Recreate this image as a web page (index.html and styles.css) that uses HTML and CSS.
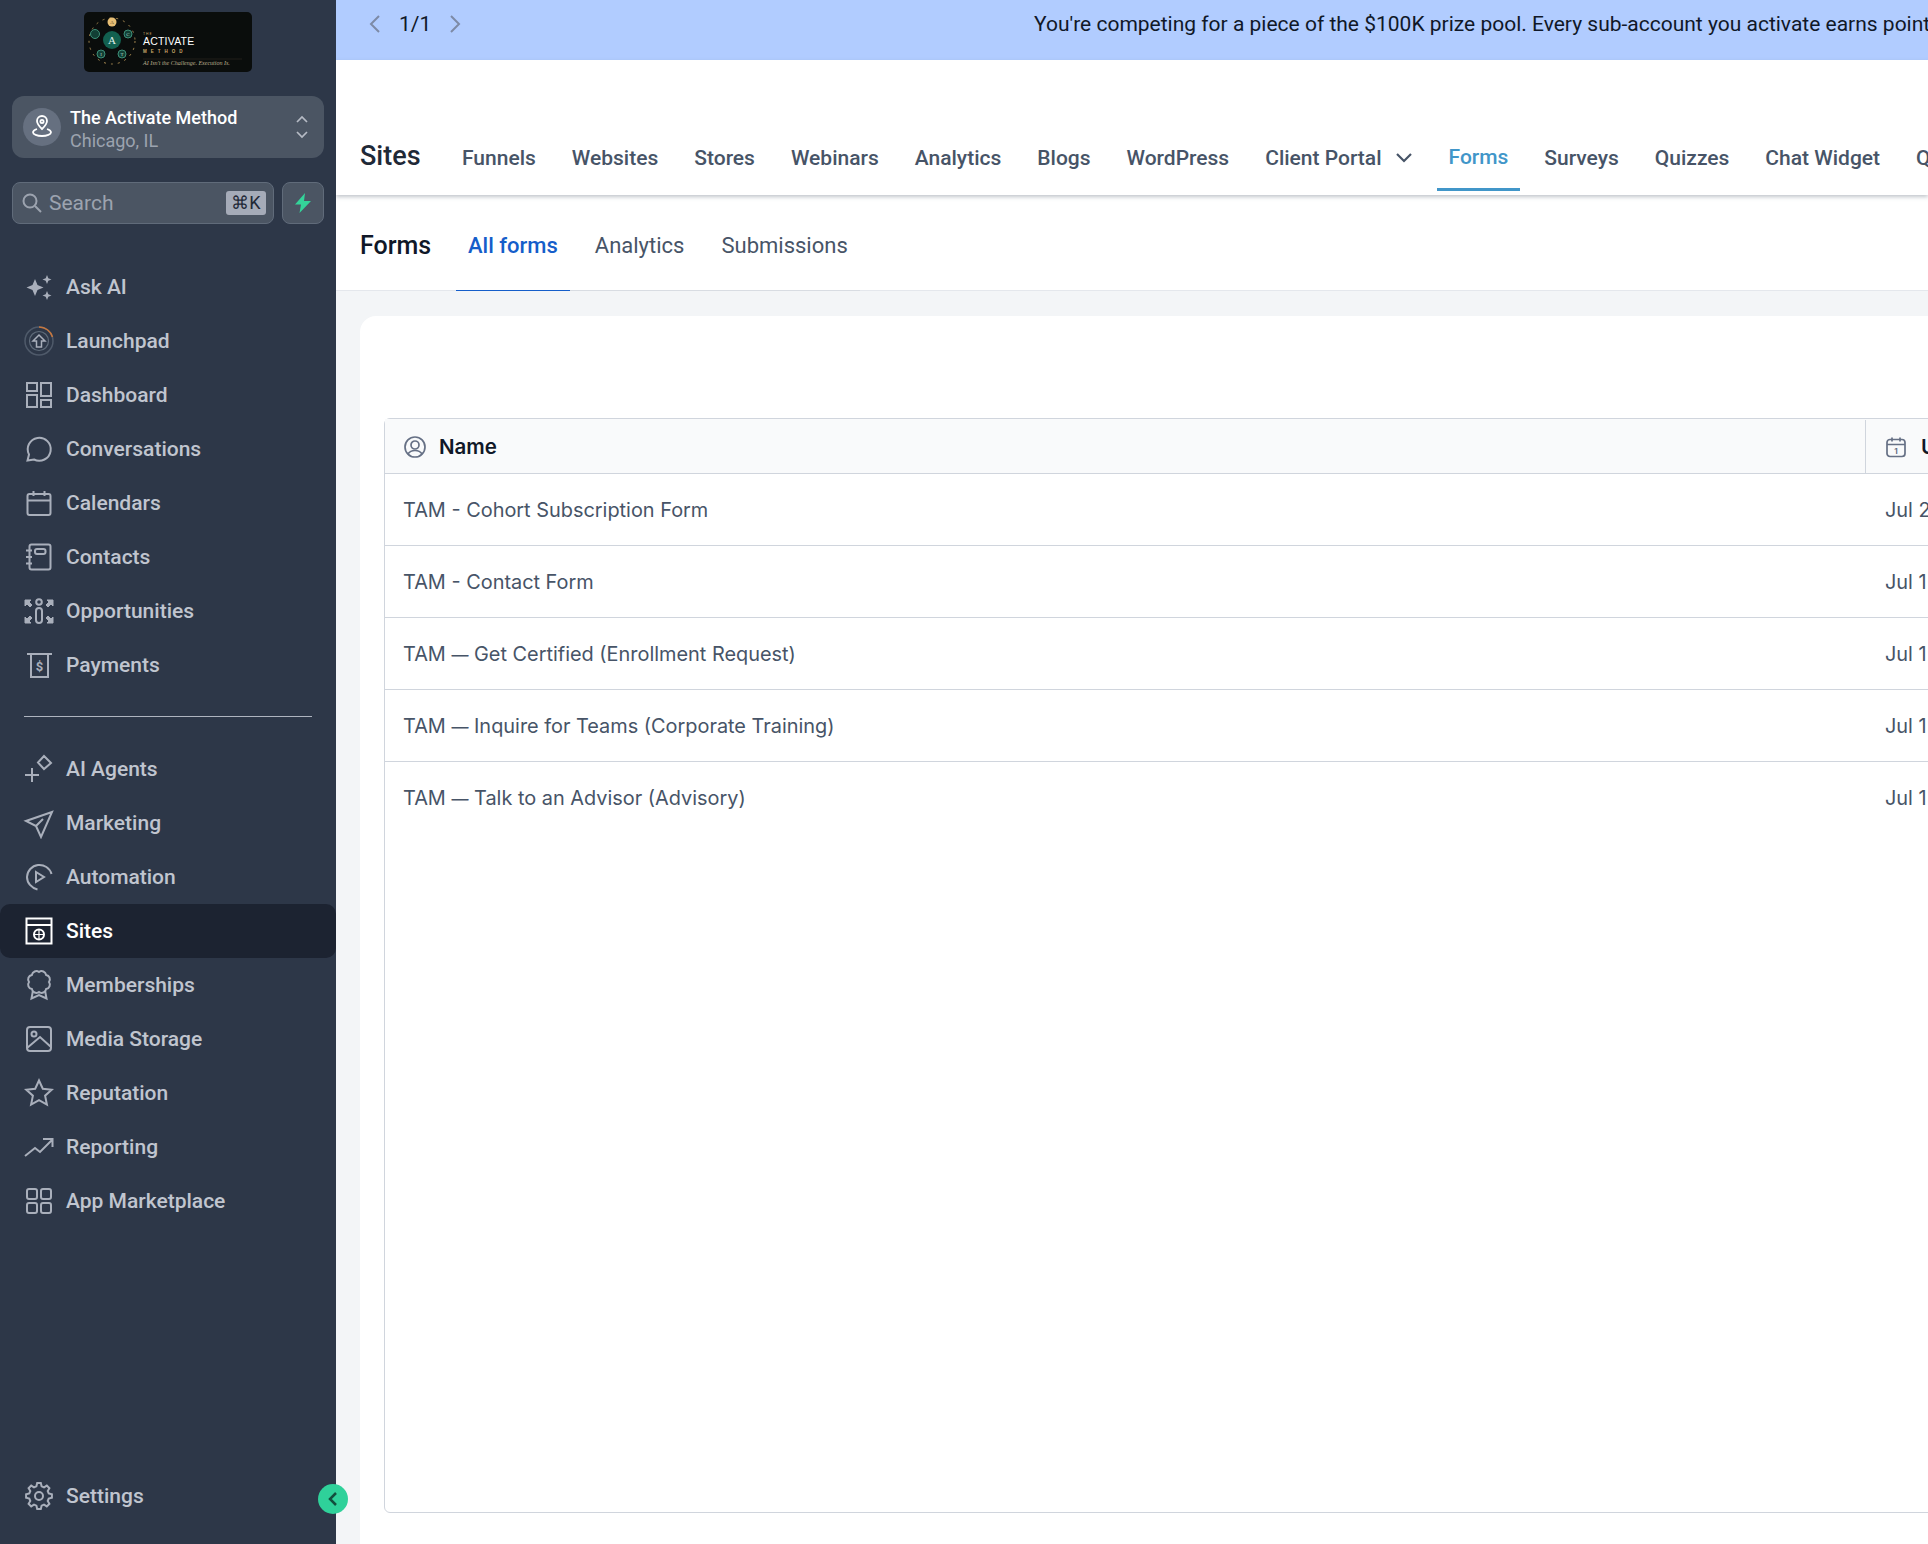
FILE: index.html
```html
<!DOCTYPE html>
<html>

<head>
    <meta charset="UTF-8">
    <title>Forms</title>
    <link rel="stylesheet" href="styles.css">
</head>

<body>
    <div class="app">
        <!-- sidebar -->
        <aside class="sidebar">
            <div class="logoWrap">
                <svg class="logo" width="168" height="60" viewBox="0 0 168 60">
                    <rect width="168" height="60" rx="5" fill="#0a0d0c"/>
                    <circle cx="28" cy="29" r="23" fill="none" stroke="#a98b52" stroke-width="1" stroke-dasharray="2 5"/>
                    <circle cx="28" cy="28" r="9" fill="#12604f"/>
                    <text x="28" y="32" class="logoA">A</text>
                    <circle cx="28" cy="10" r="4.5" fill="#e6bd74"/>
                    <circle cx="11" cy="22" r="4.5" fill="#123f35" stroke="#3d8f78"/>
                    <circle cx="44" cy="22" r="4" fill="#123f35" stroke="#3d8f78"/>
                    <circle cx="17" cy="42" r="4" fill="#123f35" stroke="#3d8f78"/>
                    <circle cx="38" cy="42" r="4" fill="#123f35" stroke="#3d8f78"/>
                    <text x="28" y="12" class="logoDot dark">A</text>
                    <text x="44" y="24" class="logoDot">C</text>
                    <text x="17" y="44" class="logoDot">I</text>
                    <text x="38" y="44" class="logoDot">T</text>
                    <text x="59" y="23" class="logoThe">THE</text>
                    <text x="59" y="33" class="logoMain">ACTIVATE</text>
                    <text x="59" y="41" class="logoSub">METHOD</text>
                    <line x1="59" y1="47" x2="158" y2="47" stroke="#3a3324" stroke-width="0.5"/>
                    <text x="59" y="53" class="logoTag">AI Isn't the Challenge. Execution Is.</text>
                </svg>
            </div>

            <div class="account">
                <span class="accountIcon">
                    <svg width="26" height="26" viewBox="0 0 26 26" fill="none" stroke="#fff" stroke-width="1.8"><path d="M13 15c-3-3-5-5-5-8a5 5 0 0 1 10 0c0 3-2 5-5 8z"/><circle cx="13" cy="7.5" r="1.6"/><path d="M8 15c-2.500.8-4 2-4 3.300 0 2 4 3.700 9 3.700s9-1.700 9-3.700c0-1.300-1.500-2.500-4-3.300"/></svg>
                </span>
                <div class="accountText">
                    <div class="accountName">The Activate Method</div>
                    <div class="accountCity">Chicago, IL</div>
                </div>
                <svg class="accountArrows" width="14" height="28" viewBox="0 0 14 28" fill="none" stroke="#b6bbc5" stroke-width="1.700"><path d="M2 9l5-5 5 5M2 19l5 5 5-5"/></svg>
            </div>

            <div class="searchRow">
                <div class="search">
                    <svg width="22" height="22" viewBox="0 0 22 22" fill="none" stroke="#9ca3af" stroke-width="2"><circle cx="9" cy="9" r="6.500"/><path d="M14 14l6 6"/></svg>
                    <span class="searchText">Search</span>
                    <span class="kbd">⌘K</span>
                </div>
                <div class="boltBtn">
                    <svg width="18" height="22" viewBox="0 0 18 22" fill="#34d399"><path d="M11 1L1 12.500h6L5.500 21 17 9h-7z"/></svg>
                </div>
            </div>

            <nav class="menu">
                <a class="item">
                    <svg class="ic" viewBox="0 0 32 32"><path class="icFill" d="M12 8l2.500 6 6 2.500-6 2.500L12 25l-2.500-6-6-2.500 6-2.500zM24 4l1.300 3.200L28.500 8.500l-3.200 1.300L24 13l-1.300-3.200L19.500 8.500l3.200-1.300zM24 20l1.300 3.200 3.200 1.300-3.200 1.300L24 29l-1.300-3.200-3.200-1.300 3.200-1.300z"/></svg>
                    Ask AI
                </a>
                <a class="item">
                    <svg class="ic" viewBox="0 0 32 32" fill="none"><circle cx="16" cy="16" r="14" stroke="#4f5a6a" stroke-width="1.500"/><path d="M16 2a14 14 0 0 1 13.500 10" stroke="#c7773e" stroke-width="1.500"/><circle cx="16" cy="16" r="9.500" stroke="#5f6b7a" stroke-width="1.200"/><path d="M16 10l-6 6h3.500v6h5v-6H22z" stroke="#a9afbb" stroke-width="1.500"/></svg>
                    Launchpad
                </a>
                <a class="item">
                    <svg class="ic" viewBox="0 0 32 32"><rect x="4" y="4" width="10" height="8"/><rect x="18" y="4" width="10" height="13"/><rect x="4" y="16" width="10" height="12"/><rect x="18" y="21" width="10" height="7"/></svg>
                    Dashboard
                </a>
                <a class="item">
                    <svg class="ic" viewBox="0 0 32 32"><path d="M4.500 27.500l1.500-6a11.500 11.500 0 1 1 5 5z"/></svg>
                    Conversations
                </a>
                <a class="item">
                    <svg class="ic" viewBox="0 0 32 32"><rect x="4.500" y="7" width="23" height="21" rx="2"/><path d="M4.500 13.500h23M10.500 4v5M21.500 4v5"/></svg>
                    Calendars
                </a>
                <a class="item">
                    <svg class="ic" viewBox="0 0 32 32"><rect x="6.500" y="3.500" width="21" height="25" rx="2"/><rect x="12" y="8" width="10.500" height="5" rx="2"/><path d="M3 9.500h6M3 16h6M3 22.500h6"/></svg>
                    Contacts
                </a>
                <a class="item">
                    <svg class="ic" viewBox="0 0 32 32"><circle cx="16" cy="7" r="2.800"/><rect x="13" y="13" width="6" height="15" rx="3"/><path class="icBold" d="M2 5h6l-2 2 3 3-2 2-3-3-2 2zM30 5h-6l2 2-3 3 2 2 3-3 2 2zM2 28h6l-2-2 3-3-2-2-3 3-2-2zM30 28h-6l2-2-3-3 2-2 3 3 2-2z"/></svg>
                    Opportunities
                </a>
                <a class="item">
                    <svg class="ic" viewBox="0 0 32 32"><path d="M4 5h25M8 5v23h17V5"/><text x="16.500" y="22" class="dollar">$</text></svg>
                    Payments
                </a>

                <div class="menuLine"></div>

                <a class="item">
                    <svg class="ic" viewBox="0 0 32 32"><path d="M21 3l7 7-7 6-6-6.500zM9 15v14M2 22h14"/></svg>
                    AI Agents
                </a>
                <a class="item">
                    <svg class="ic" viewBox="0 0 32 32"><path d="M29 5L3 14l10 5 5 11zM13 19l7-7"/></svg>
                    Marketing
                </a>
                <a class="item">
                    <svg class="ic" viewBox="0 0 32 32"><path d="M28.500 13A12.500 12.500 0 0 0 4 16c0 6 4.500 11 10.500 12.500"/><path d="M13 11l8 5-8 5z"/></svg>
                    Automation
                </a>
                <a class="item on">
                    <svg class="ic" viewBox="0 0 32 32"><rect x="3.500" y="3.500" width="25" height="25"/><path d="M3.500 10h25"/><circle cx="16" cy="19.500" r="5"/><path d="M11 19.500h10M16 14.500v10" stroke-width="1.200"/></svg>
                    Sites
                </a>
                <a class="item">
                    <svg class="ic" viewBox="0 0 32 32"><path d="M16 3A4.500 4.500 0 0 1 23.100 5.900 4.500 4.500 0 0 1 26 13 4.500 4.500 0 0 1 23.100 20.100 4.500 4.500 0 0 1 16 23 4.500 4.500 0 0 1 8.900 20.100 4.500 4.500 0 0 1 6 13 4.500 4.500 0 0 1 8.900 5.900 4.500 4.500 0 0 1 16 3z"/><path d="M10 21.500l-1.500 8 7.500-3.500 7.500 3.500-1.500-8"/></svg>
                    Memberships
                </a>
                <a class="item">
                    <svg class="ic" viewBox="0 0 32 32"><rect x="4" y="4" width="24" height="24" rx="3"/><circle cx="11" cy="11" r="2.500"/><path d="M4 25l13-11 11 10"/></svg>
                    Media Storage
                </a>
                <a class="item">
                    <svg class="ic" viewBox="0 0 32 32"><path d="M16 3.500l3.800 8.200 8.900 1-6.600 6 1.800 8.800-7.900-4.400-7.900 4.400 1.800-8.800-6.600-6 8.900-1z"/></svg>
                    Reputation
                </a>
                <a class="item">
                    <svg class="ic" viewBox="0 0 32 32"><path d="M2 25l10-8 5 4 12-12M20 8h9.500v8"/></svg>
                    Reporting
                </a>
                <a class="item">
                    <svg class="ic" viewBox="0 0 32 32"><rect x="4" y="4" width="10" height="10" rx="2"/><rect x="18" y="4" width="10" height="10" rx="2"/><rect x="4" y="18" width="10" height="10" rx="2"/><rect x="18" y="18" width="10" height="10" rx="2"/></svg>
                    App Marketplace
                </a>
            </nav>

            <a class="item settings">
                <svg class="ic" viewBox="0 0 32 32"><polygon points="13.400,6.300 14.200,3.100 17.800,3.100 18.600,6.300 21,7.300 23.800,5.600 26.400,8.200 24.700,11 25.700,13.400 28.900,14.200 28.900,17.800 25.700,18.600 24.700,21 26.400,23.800 23.800,26.400 21,24.700 18.600,25.700 17.800,28.900 14.200,28.900 13.400,25.700 11,24.700 8.200,26.400 5.600,23.800 7.300,21 6.300,18.600 3.100,17.800 3.100,14.200 6.300,13.400 7.300,11 5.600,8.200 8.200,5.600 11,7.300"/><circle cx="16" cy="16" r="4"/></svg>
                Settings
            </a>
            <span class="collapse">
                <svg width="14" height="16" viewBox="0 0 14 16" fill="none" stroke="#134e3d" stroke-width="2.500"><path d="M10 2L4 8l6 6"/></svg>
            </span>
        </aside>

        <main class="main">
            <!-- banner -->
            <div class="banner">
                <div class="pager">
                    <svg width="14" height="20" viewBox="0 0 14 20" fill="none" stroke="#7d8aa6" stroke-width="2"><path d="M11 2L3 10l8 8"/></svg>
                    <span>1/1</span>
                    <svg width="14" height="20" viewBox="0 0 14 20" fill="none" stroke="#7d8aa6" stroke-width="2"><path d="M3 2l8 8-8 8"/></svg>
                </div>
                <div class="bannerText">You're competing for a piece of the $100K prize pool. Every sub-account you activate earns point</div>
            </div>

            <!-- top tabs -->
            <header class="topbar">
                <div class="topTitle">Sites</div>
                <div class="topTabs">
                    <a>Funnels</a>
                    <a>Websites</a>
                    <a>Stores</a>
                    <a>Webinars</a>
                    <a>Analytics</a>
                    <a>Blogs</a>
                    <a>WordPress</a>
                    <a>Client Portal
                        <svg width="18" height="12" viewBox="0 0 18 12" fill="none" stroke="#475467" stroke-width="2.200"><path d="M2 2l7 7 7-7"/></svg>
                    </a>
                    <a class="on">Forms</a>
                    <a>Surveys</a>
                    <a>Quizzes</a>
                    <a>Chat Widget</a>
                    <a>Q</a>
                </div>
            </header>

            <!-- sub tabs -->
            <div class="subbar">
                <div class="subTitle">Forms</div>
                <div class="subTabs">
                    <a class="on">All forms</a>
                    <a>Analytics</a>
                    <a>Submissions</a>
                </div>
            </div>

            <!-- card + table -->
            <section class="content">
                <div class="card">
                    <div class="table">
                        <div class="row head">
                            <div class="cellName">
                                <svg width="24" height="24" viewBox="0 0 24 24" fill="none" stroke="#667085" stroke-width="1.700"><circle cx="12" cy="12" r="10"/><circle cx="12" cy="10" r="4"/><path d="M5 19c1.500-2.500 4-3.500 7-3.500s5.500 1 7 3.500"/></svg>
                                Name
                            </div>
                            <div class="cellDate">
                                <svg width="24" height="24" viewBox="0 0 24 24" fill="none" stroke="#667085" stroke-width="1.700"><rect x="3" y="4.500" width="18" height="17" rx="3"/><path d="M3 9.500h18M8 2.500v4M16 2.500v4"/><text x="12" y="18.500" class="calNum">1</text></svg>
                                U
                            </div>
                        </div>
                        <div class="row">
                            <div class="cellName">TAM - Cohort Subscription Form</div>
                            <div class="cellDate">Jul 2</div>
                        </div>
                        <div class="row">
                            <div class="cellName">TAM - Contact Form</div>
                            <div class="cellDate">Jul 1</div>
                        </div>
                        <div class="row">
                            <div class="cellName"><span>TAM <span class="dash">—</span> Get Certified (Enrollment Request)</span></div>
                            <div class="cellDate">Jul 1</div>
                        </div>
                        <div class="row">
                            <div class="cellName"><span>TAM <span class="dash">—</span> Inquire for Teams (Corporate Training)</span></div>
                            <div class="cellDate">Jul 1</div>
                        </div>
                        <div class="row last">
                            <div class="cellName"><span>TAM <span class="dash">—</span> Talk to an Advisor (Advisory)</span></div>
                            <div class="cellDate">Jul 1</div>
                        </div>
                    </div>
                </div>
            </section>
        </main>
    </div>
</body>

</html>
```

FILE: styles.css
```css
* {box-sizing: border-box;}

html, body {
    margin: 0;
    height: 100%;
    overflow: hidden;
    font-family: Roboto, "Liberation Sans", sans-serif;
}

.app {
    display: flex;
    width: 100%;
    height: 100vh;
}

/* sidebar */
.sidebar {
    position: relative;
    z-index: 2;
    display: flex;
    flex-direction: column;
    flex: 0 0 336px;
    background: #2d3748;
    padding-top: 12px;
}

.logoWrap {
    display: flex;
    justify-content: center;
    height: 60px;
}

.logoA {font-family: "Liberation Serif", serif; font-size: 11px; fill: #dfeee8; text-anchor: middle;}
.logoDot {font-family: "Liberation Serif", serif; font-size: 5px; fill: #a8d5c5; text-anchor: middle;}
.logoDot.dark {fill: #4a3a1c;}
.logoThe {font-size: 3.500px; fill: #c9a86a; letter-spacing: 1px;}
.logoMain {font-family: "Liberation Sans", sans-serif; font-size: 10.500px; fill: #fff; letter-spacing: 0.200px;}
.logoSub {font-family: "Liberation Sans", sans-serif; font-size: 4.500px; fill: #c9a86a; letter-spacing: 4px; font-weight: bold;}
.logoTag {font-family: "Liberation Serif", serif; font-style: italic; font-size: 6px; fill: #bdb08f;}

.account {
    display: flex;
    align-items: center;
    height: 62px;
    margin: 24px 12px 0;
    padding: 0 15px 0 11px;
    border-radius: 12px;
    background: #4b5563;
}

.accountIcon {
    display: flex;
    align-items: center;
    justify-content: center;
    width: 38px;
    height: 38px;
    border-radius: 50%;
    background: #667080;
}

.accountText {flex: 1; margin-left: 9px; padding-top: 4px;}
.accountName {font-size: 18px; font-weight: 500; line-height: 22px; color: #fff;}
.accountCity {font-size: 18px; line-height: 23px; color: #9ca3af;}

.searchRow {
    display: flex;
    gap: 8px;
    margin: 24px 12px 0;
}

.search {
    display: flex;
    align-items: center;
    flex: 1;
    height: 42px;
    padding: 0 7px 0 8px;
    border: 1px solid #606b7a;
    border-radius: 8px;
    background: #4b5563;
}

.searchText {flex: 1; margin-left: 6px; font-size: 21px; color: #9ca3af;}

.kbd {
    width: 40px;
    height: 24px;
    border-radius: 3px;
    background: #a5abb8;
    color: #1f2937;
    font-size: 18px;
    line-height: 24px;
    text-align: center;
}

.boltBtn {
    display: flex;
    align-items: center;
    justify-content: center;
    width: 42px;
    height: 42px;
    border: 1px solid #606b7a;
    border-radius: 8px;
    background: #4b5563;
}

.menu {margin-top: 36px; flex: 1;}

.item {
    display: flex;
    align-items: center;
    gap: 11px;
    height: 54px;
    padding-left: 23px;
    border-radius: 10px;
    color: #c0c5cf;
    font-size: 21px;
    font-weight: 500;
}

.ic {
    width: 32px;
    height: 32px;
    flex: none;
    fill: none;
    stroke: #a9afbb;
    stroke-width: 2;
}

.icFill {fill: #a9afbb; stroke: none;}
.icBold {fill: #a9afbb; stroke: #a9afbb; stroke-width: 1;}
.dollar {font-size: 13px; font-weight: 700; fill: #a9afbb; stroke: none; text-anchor: middle;}

.item.on {background: #1c2331; color: #fff;}
.item.on .ic {stroke: #fff;}

.menuLine {
    height: 1px;
    margin: 24px 24px 25px;
    background: #aeb4bf;
}

.settings {margin-bottom: 21px;}

.collapse {
    position: absolute;
    left: 318px;
    top: 1484px;
    display: flex;
    align-items: center;
    justify-content: center;
    width: 30px;
    height: 30px;
    border-radius: 50%;
    background: #2fd19a;
}

/* main */
.main {
    flex: 1;
    min-width: 0;
    display: flex;
    flex-direction: column;
    overflow: hidden;
    background: #f3f5f7;
}

.banner {
    display: flex;
    flex: none;
    height: 60px;
    background: #b1ccff;
    color: #101828;
    font-size: 21px;
    line-height: 48px;
    white-space: nowrap;
}

.pager {
    display: flex;
    flex: none;
    align-items: center;
    gap: 17px;
    height: 48px;
    margin-left: 32px;
    width: 666px;
}

.topbar {
    display: flex;
    flex: none;
    align-items: flex-end;
    height: 135px;
    padding-left: 24px;
    background: #fff;
    box-shadow: 0 2px 4px rgba(100, 110, 125, 0.4);
    position: relative;
    white-space: nowrap;
}

.topTitle {
    flex: none;
    width: 90px;
    margin-bottom: 23px;
    color: #1f2937;
    font-size: 27px;
    font-weight: 500;
    line-height: 32px;
}

.topTabs {display: flex; flex: none;}

/* 글자 중앙 158, 밑줄 188~191 */
.topTabs a {
    display: flex;
    flex: none;
    align-items: center;
    gap: 13px;
    height: 50px;
    margin-bottom: 4px;
    padding: 0 12px 13px;
    margin-right: 12px;
    border-bottom: 3px solid transparent;
    color: #475467;
    font-size: 21px;
    font-weight: 500;
}

.topTabs a.on {
    padding-bottom: 15px;
    border-bottom-color: #4196c9;
    color: #4196c9;
}

.subbar {
    display: flex;
    flex: none;
    height: 96px;
    padding-left: 24px;
    background: #fff;
    border-bottom: 1px solid #e4e7ec;
    white-space: nowrap;
}

.subTitle {
    width: 72px;
    margin-right: 24px;
    color: #101828;
    font-size: 25px;
    font-weight: 500;
    line-height: 102px;
}

.subTabs {display: flex; gap: 13px; border-bottom: 1px solid #d8dce2; margin-bottom: -1px;}

.subTabs a {
    padding: 0 12px;
    color: #475467;
    font-size: 22px;
    line-height: 102px;
    height: 96px;
}

.subTabs a.on {
    color: #155eca;
    font-weight: 500;
    border-bottom: 1px solid #155eca;
}

.content {
    flex: 1;
    padding: 25px 0 0 24px;
}

.card {
    width: 1900px;
    height: 1300px;
    padding: 102px 24px 0;
    border-radius: 16px;
    background: #fff;
}

.table {
    height: 1095px;
    border: 1px solid #d0d5dd;
    border-radius: 6px;
    font-family: Inter, "Liberation Sans", sans-serif;
}

.row {
    display: flex;
    height: 72px;
    border-bottom: 1px solid #d0d5dd;
    color: #475467;
    font-size: 19.900px;
}

.row.last {border-bottom: none;}

.row.head {
    height: 55px;
    padding-top: 1px;
    background: #f9fafb;
    color: #101828;
    font-size: 20.500px;
    font-weight: 600;
}

.cellName, .cellDate {
    display: flex;
    align-items: center;
    padding-left: 18px;
    white-space: nowrap;
}

.cellName {width: 1480px; gap: 12px;}
.cellDate {flex: 1; gap: 13px; padding-left: 20px;}
.head .cellDate {border-left: 1px solid #d0d5dd; padding-left: 18px;}
.dash {font-size: 17px;}
.calNum {font-size: 8px; font-weight: 700; fill: #667085; stroke: none; text-anchor: middle;}
```
